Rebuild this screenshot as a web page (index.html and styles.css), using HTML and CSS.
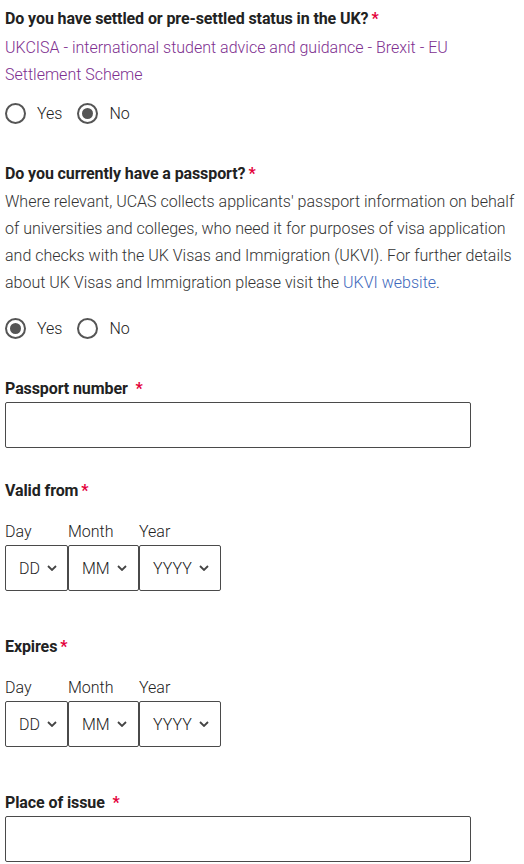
FILE: index.html
```html
<!DOCTYPE html>
<html lang="en">
<head>
<meta charset="utf-8">
<title>Passport details</title>
<link rel="stylesheet" href="styles.css">
</head>
<body>
<form class="form">
  <fieldset class="group g-settled">
    <legend class="label">Do you have settled or pre-settled status in the UK?<span class="req">*</span></legend>
    <p class="hint"><a class="link-visited" href="#">UKCISA - international student advice and guidance - Brexit - EU Settlement Scheme</a></p>
    <div class="radios r-first">
      <label class="radio"><span class="circle"></span><span class="rtext">Yes</span></label>
      <label class="radio"><span class="circle checked"></span><span class="rtext">No</span></label>
    </div>
  </fieldset>

  <fieldset class="group g-passport">
    <legend class="label">Do you currently have a passport?<span class="req">*</span></legend>
    <p class="hint">Where relevant, UCAS collects applicants' passport information on behalf of universities and colleges, who need it for purposes of visa application and checks with the UK Visas and Immigration (UKVI). For further details about UK Visas and Immigration please visit the <a class="link" href="#">UKVI website</a>.</p>
    <div class="radios r-second">
      <label class="radio"><span class="circle checked"></span><span class="rtext">Yes</span></label>
      <label class="radio"><span class="circle"></span><span class="rtext">No</span></label>
    </div>
  </fieldset>

  <div class="field f-number">
    <div class="label">Passport number <span class="req spaced">*</span></div>
    <div class="textbox"></div>
  </div>

  <div class="field f-valid">
    <div class="label">Valid from<span class="req">*</span></div>
    <div class="date">
      <div class="dcol"><div class="dlabel">Day</div><div class="sel s-dd">DD<svg class="chev" viewBox="0 0 10 6" width="10" height="6"><path d="M1 1l4 4 4-4" fill="none" stroke="#444" stroke-width="1.8"/></svg></div></div>
      <div class="dcol"><div class="dlabel">Month</div><div class="sel s-mm">MM<svg class="chev" viewBox="0 0 10 6" width="10" height="6"><path d="M1 1l4 4 4-4" fill="none" stroke="#444" stroke-width="1.8"/></svg></div></div>
      <div class="dcol"><div class="dlabel">Year</div><div class="sel s-yy">YYYY<svg class="chev" viewBox="0 0 10 6" width="10" height="6"><path d="M1 1l4 4 4-4" fill="none" stroke="#444" stroke-width="1.8"/></svg></div></div>
    </div>
  </div>

  <div class="field f-expires">
    <div class="label">Expires<span class="req">*</span></div>
    <div class="date">
      <div class="dcol"><div class="dlabel">Day</div><div class="sel s-dd">DD<svg class="chev" viewBox="0 0 10 6" width="10" height="6"><path d="M1 1l4 4 4-4" fill="none" stroke="#444" stroke-width="1.8"/></svg></div></div>
      <div class="dcol"><div class="dlabel">Month</div><div class="sel s-mm">MM<svg class="chev" viewBox="0 0 10 6" width="10" height="6"><path d="M1 1l4 4 4-4" fill="none" stroke="#444" stroke-width="1.8"/></svg></div></div>
      <div class="dcol"><div class="dlabel">Year</div><div class="sel s-yy">YYYY<svg class="chev" viewBox="0 0 10 6" width="10" height="6"><path d="M1 1l4 4 4-4" fill="none" stroke="#444" stroke-width="1.8"/></svg></div></div>
    </div>
  </div>

  <div class="field f-place">
    <div class="label">Place of issue <span class="req spaced">*</span></div>
    <div class="textbox"></div>
  </div>
</form>
</body>
</html>
```

FILE: styles.css
```css
html, body {
  margin: 0;
  padding: 0;
  background: #fff;
}
body {
  font-family: Roboto, "Liberation Sans", Arial, sans-serif;
  font-size: 16px;
  font-weight: 300;
  color: #3a3a3a;
}
.form {
  padding: 6.5px 0 0 5px;
}
.group {
  border: 0;
  margin: 0;
  padding: 0;
  min-width: 0;
}
.label {
  display: block;
  padding: 0;
  font-size: 16px;
  font-weight: 700;
  line-height: 24px;
  color: #222;
  letter-spacing: -0.1px;
}
.req {
  color: #e4003b;
  font-weight: 700;
  margin-left: 3px;
}
.req.spaced {
  margin-left: 4px;
}
.hint {
  margin: 3.5px 0 0;
  line-height: 27px;
  font-size: 16px;
  font-weight: 300;
  color: #333;
  width: 519px;
}
.link-visited {
  color: #7e2f90;
  text-decoration: none;
}
.link {
  color: #3d68bb;
  text-decoration: none;
}
.g-passport {
  margin-top: 36px;
}
.g-passport .hint {
  margin-top: 2.5px;
}
.radios {
  display: flex;
  gap: 15px;
  height: 24px;
  align-items: center;
}
.r-first {
  margin-top: 13.5px;
}
.r-second {
  margin-top: 20.5px;
}
.radio {
  display: flex;
  align-items: center;
  line-height: 24px;
  color: #222;
  font-weight: 300;
}
.circle {
  box-sizing: border-box;
  width: 21px;
  height: 21px;
  border: 2px solid #555;
  border-radius: 50%;
  display: flex;
  align-items: center;
  justify-content: center;
  margin-right: 11px;
}
.circle.checked::after {
  content: "";
  width: 11px;
  height: 11px;
  border-radius: 50%;
  background: #555;
}
.field .label {
  margin-bottom: 1.5px;
}
.f-number {
  margin-top: 36px;
}
.f-valid {
  margin-top: 30.5px;
}
.f-valid > .label,
.f-expires > .label {
  margin-bottom: 17px;
}
.f-expires {
  margin-top: 43.5px;
}
.f-place {
  margin-top: 43.5px;
}
.textbox {
  box-sizing: border-box;
  width: 466px;
  height: 46px;
  border: 1.5px solid #4a4a4a;
  border-radius: 2px;
}
.date {
  display: flex;
}
.dlabel {
  line-height: 24px;
  margin-bottom: 1.5px;
  color: #222;
}
.sel {
  box-sizing: border-box;
  height: 46px;
  border: 1.5px solid #4a4a4a;
  border-radius: 2px;
  display: flex;
  align-items: center;
  padding-left: 13px;
  color: #222;
  font-size: 16px;
}
.chev {
  margin-left: 7px;
}
.s-dd { width: 63px; }
.s-mm { width: 71px; }
.s-yy { width: 82px; }
```
